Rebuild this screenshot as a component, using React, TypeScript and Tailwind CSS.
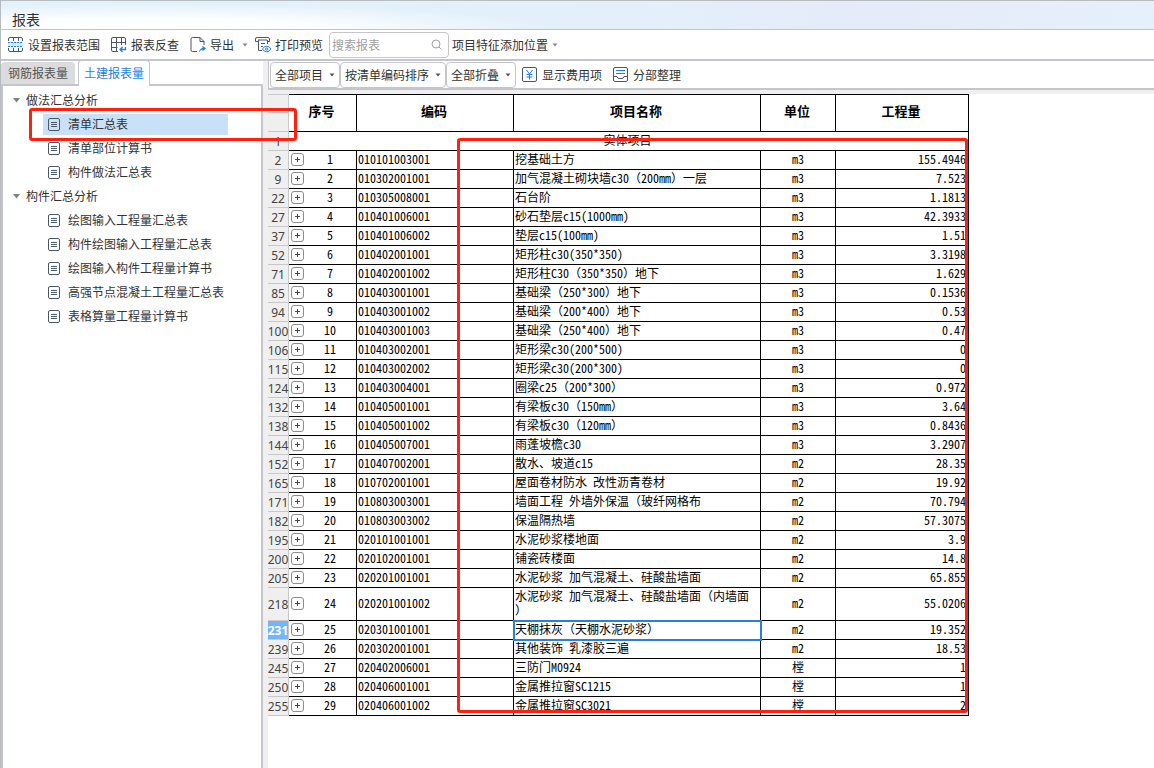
import type { ReactNode } from "react";

const INK = "#4a5568";
const BLUE = "#1e7fe6";

type Row = [head: string, no: number, code: string, name: string, unit: string, qty: string];

const rows: Row[] = [
  ["2", 1, "010101003001", "挖基础土方", "m3", "155.4946"],
  ["9", 2, "010302001001", "加气混凝土砌块墙c30（200mm）一层", "m3", "7.523"],
  ["22", 3, "010305008001", "石台阶", "m3", "1.1813"],
  ["27", 4, "010401006001", "砂石垫层c15(1000mm)", "m3", "42.3933"],
  ["37", 5, "010401006002", "垫层c15(100mm)", "m3", "1.51"],
  ["52", 6, "010402001001", "矩形柱c30(350*350)", "m3", "3.3198"],
  ["71", 7, "010402001002", "矩形柱C30（350*350）地下", "m3", "1.629"],
  ["85", 8, "010403001001", "基础梁（250*300）地下", "m3", "0.1536"],
  ["94", 9, "010403001002", "基础梁（200*400）地下", "m3", "0.53"],
  ["100", 10, "010403001003", "基础梁（250*400）地下", "m3", "0.47"],
  ["106", 11, "010403002001", "矩形梁c30(200*500)", "m3", "0"],
  ["115", 12, "010403002002", "矩形梁c30(200*300)", "m3", "0"],
  ["124", 13, "010403004001", "圈梁c25（200*300）", "m3", "0.972"],
  ["132", 14, "010405001001", "有梁板c30（150mm）", "m3", "3.64"],
  ["138", 15, "010405001002", "有梁板c30（120mm）", "m3", "0.8436"],
  ["144", 16, "010405007001", "雨蓬坡檐c30", "m3", "3.2907"],
  ["152", 17, "010407002001", "散水、坡道c15", "m2", "28.35"],
  ["165", 18, "010702001001", "屋面卷材防水 改性沥青卷材", "m2", "19.92"],
  ["171", 19, "010803003001", "墙面工程 外墙外保温（玻纤网格布", "m2", "70.794"],
  ["182", 20, "010803003002", "保温隔热墙", "m2", "57.3075"],
  ["195", 21, "020101001001", "水泥砂浆楼地面", "m2", "3.9"],
  ["200", 22, "020102001001", "铺瓷砖楼面", "m2", "14.8"],
  ["205", 23, "020201001001", "水泥砂浆 加气混凝土、硅酸盐墙面", "m2", "65.855"],
  ["218", 24, "020201001002", "水泥砂浆 加气混凝土、硅酸盐墙面（内墙面）", "m2", "55.0206"],
  ["231", 25, "020301001001", "天棚抹灰（天棚水泥砂浆）", "m2", "19.352"],
  ["239", 26, "020302001001", "其他装饰 乳漆胶三遍", "m2", "18.53"],
  ["245", 27, "020402006001", "三防门M0924", "樘", "1"],
  ["250", 28, "020406001001", "金属推拉窗SC1215", "樘", "1"],
  ["255", 29, "020406001002", "金属推拉窗SC3021", "樘", "2"],
];

const tree = [
  { title: "做法汇总分析", items: ["清单汇总表", "清单部位计算书", "构件做法汇总表"] },
  {
    title: "构件汇总分析",
    items: [
      "绘图输入工程量汇总表",
      "构件绘图输入工程量汇总表",
      "绘图输入构件工程量计算书",
      "高强节点混凝土工程量汇总表",
      "表格算量工程量计算书",
    ],
  },
];

function Icon({ children }: { children: ReactNode }) {
  return (
    <svg width="16" height="16" viewBox="0 0 16 16" fill="none" stroke={INK} aria-hidden="true" className="shrink-0">
      {children}
    </svg>
  );
}

function RangeIcon() {
  return (
    <Icon>
      <path d="M0 5h15v5H0Z" fill="#d6ecfd" stroke="none" />
      <path d="M.5 4V2Q.5.5 2 .5h11q1.500 0 1.500 1.500v2M.5 11v2Q.5 14.500 2 14.500h11q1.500 0 1.500-1.500v-2M5.500.5V4M10.500.5V4M5.500 11v3.500M10.500 11v3.500" />
      <path d="M0 5.500h15M0 9.500h15" stroke={BLUE} strokeDasharray="2 1" />
    </Icon>
  );
}

function BackCheckIcon() {
  return (
    <Icon>
      <path d="M7 14.500H2Q.5 14.500.5 13V2Q.5.5 2 .5h11q1.500 0 1.500 1.500v6M5.500.5v14M10.500.5v7.500M.5 5.500h14M.5 10.500h6" />
      <path d="M14.500 10v2.500h-5M11.500 10 9 12.500l2.500 2.500" stroke={BLUE} strokeWidth="1.300" />
    </Icon>
  );
}

function ExportIcon() {
  return (
    <Icon>
      <path d="M7 14.500H2.500Q1 14.500 1 13V2Q1 .5 2.500.5H10l4 4V8M10 .5V4.500h4" />
      <path d="M9 15.500q.3-4 3.500-4.500V8.800L16 11.500l-3.500 2.700v-1.700Q10.500 12.700 9 15.500Z" fill={BLUE} stroke="none" />
    </Icon>
  );
}

function PreviewIcon() {
  return (
    <Icon>
      <path d="M3 4.500H.5V2Q.5.5 2 .5h11q1.500 0 1.500 1.500v2.500H12M3 3h9M3.500 3v10.500H7M12.500 3v4M6 6.500h4M6 9.500h2" />
      <path d="M7.500 12q1.500-2.800 4.200-2.800T16 12q-1.500 2.800-4.300 2.800T7.500 12Z" stroke={BLUE} />
      <circle cx="11.700" cy="12" r="1.200" stroke={BLUE} />
    </Icon>
  );
}

function SheetIcon() {
  return (
    <svg width="12" height="13" viewBox="0 0 12 13" fill="none" stroke={INK} aria-hidden="true" className="shrink-0">
      <rect x=".5" y=".5" width="11" height="12" rx="1.500" />
      <path d="M3 4.500h6M3 6.500h6M3 8.500h6" />
    </svg>
  );
}

function Caret({ className = "fill-[#555]" }: { className?: string }) {
  return (
    <svg width="6" height="4" viewBox="0 0 6 4" aria-hidden="true" className={`shrink-0 ${className}`}>
      <path d="M.5.5h5L3 3.500Z" />
    </svg>
  );
}

function DropButton({ children }: { children: ReactNode }) {
  return (
    <button type="button" className="flex h-[26px] items-center gap-[6px] rounded border border-[#c6c6ca] bg-white px-1">
      {children}
      <Caret />
    </button>
  );
}

function TitleBar() {
  return (
    <header className="flex h-[30px] items-end border-t border-b border-t-[#b8bcc0] border-b-[#c0c4ca] bg-[radial-gradient(ellipse_400px_26px_at_150px_100%,#ffffff_35%,transparent),linear-gradient(to_right,#e2f1fb,#e3f0fa_55%,#e5ebf8_75%,#e6f0fa)] pl-[11px]">
      <h1 className="text-[14px] leading-[20px] text-[#333]">报表</h1>
    </header>
  );
}

function MainToolbar() {
  return (
    <div className="flex h-[31px] items-center border-b-2 border-[#c4c6cc] bg-white pl-[7px]">
      <button type="button" className="flex items-center gap-1"><RangeIcon />设置报表范围</button>
      <button type="button" className="ml-[11px] flex items-center gap-1"><BackCheckIcon />报表反查</button>
      <button type="button" className="ml-[11px] flex items-center gap-1"><ExportIcon />导出<Caret className="ml-1 fill-[#888]" /></button>
      <button type="button" className="ml-[7px] flex items-center gap-1"><PreviewIcon />打印预览</button>
      <label className="ml-[6px] flex h-[26px] w-[120px] items-center rounded border border-[#c6c6ca] px-[2px]">
        <input type="text" aria-label="搜索报表" placeholder="搜索报表" className="min-w-0 flex-1 outline-none placeholder:text-[#a0a0a0]" />
        <svg width="11" height="11" viewBox="0 0 11 11" fill="none" stroke="#a0a0a0" aria-hidden="true" className="mr-1">
          <circle cx="5" cy="5" r="4" />
          <path d="m8 8 2.500 2.500" />
        </svg>
      </label>
      <button type="button" className="ml-[3px] flex items-center gap-1">项目特征添加位置<Caret className="fill-[#888]" /></button>
    </div>
  );
}

function Sidebar() {
  return (
    <aside className="flex w-[262px] shrink-0 flex-col">
      <div role="tablist" className="flex h-[23px] items-end">
        <button type="button" role="tab" aria-selected="false" className="h-[22px] w-[74px] rounded-t bg-[#dcdcdc] text-[#555]">钢筋报表量</button>
        <button type="button" role="tab" aria-selected="true" className="relative -mb-[2px] ml-[3px] h-[26px] w-[72px] rounded-t border border-b-0 border-[#c4c6cc] bg-white pb-[2px] text-[#1e7fe6]">土建报表量</button>
      </div>
      <nav className="flex-1 border-2 border-b-0 border-[#c4c6cc] bg-white pt-[2px]">
        {tree.map((group) => (
          <section key={group.title}>
            <h2 className="flex h-6 items-center gap-[6px] pl-[10px]">
              <svg width="7" height="5" viewBox="0 0 7 5" fill="#808080" aria-hidden="true"><path d="M0 0h7L3.500 4.500Z" /></svg>
              {group.title}
            </h2>
            <ul>
              {group.items.map((item) => (
                <li key={item} className="flex h-6 items-center pl-[40px]">
                  <a
                    href="#"
                    className={`flex h-[21px] w-[185px] items-center gap-2 pl-[5px] whitespace-nowrap ${item === "清单汇总表" ? "bg-[#c9e0f9]" : ""}`}
                  >
                    <SheetIcon />
                    {item}
                  </a>
                </li>
              ))}
            </ul>
          </section>
        ))}
      </nav>
    </aside>
  );
}

function ReportToolbar() {
  return (
    <div className="flex h-[29px] items-center border-b-2 border-l border-[#c4c6cc] bg-white pl-[1px]">
      <DropButton>全部项目</DropButton>
      <DropButton>按清单编码排序</DropButton>
      <DropButton>全部折叠</DropButton>
      <button type="button" className="ml-[6px] flex items-center gap-1">
        <Icon>
          <rect x=".5" y=".5" width="14" height="14" rx="1.500" />
          <path d="m4.500 3 3 4 3-4M7.500 7v5.500M4.500 7.500h6M4.500 10h6" stroke={BLUE} />
        </Icon>
        显示费用项
      </button>
      <button type="button" className="ml-[11px] flex items-center gap-1">
        <Icon>
          <rect x=".5" y=".5" width="14" height="14" rx="1.500" />
          <path d="M3 3.500h9M3 6.500h9" stroke={BLUE} />
          <path d="M.5 9.500H4q.5 2 2 2h3q1.500 0 2-2h3.500" />
        </Icon>
        分部整理
      </button>
    </div>
  );
}

const headCell = "border-t border-r border-b border-black bg-white p-0 pr-[2px] pb-1 text-[13px] font-bold";
const cell = "border-r border-b border-black bg-white p-0 pb-[2px]";
const rowHead = "border-r border-b border-[#c8c8c8] bg-[#efefef] p-0 pt-[2px] text-[12px] leading-[16px] font-normal font-['Noto_Sans',sans-serif] text-[#444]";
const activeRowHead = "border-r border-b border-[#c8c8c8] bg-[#74b5f8] p-0 pt-[2px] text-[12px] leading-[16px] font-bold font-['Noto_Sans',sans-serif] text-white";

function ReportTable() {
  return (
    <table className="w-[701px] table-fixed border-separate border-spacing-0 font-['Noto_Sans_Mono_CJK_SC','Noto_Sans_CJK_SC','Liberation_Mono',monospace] leading-[14px] text-black">
      <colgroup>
        <col className="w-[21px]" />
        <col className="w-[68px]" />
        <col className="w-[157px]" />
        <col className="w-[247px]" />
        <col className="w-[75px]" />
        <col className="w-[133px]" />
      </colgroup>
      <thead>
        <tr className="h-[38px]">
          <td className="border-t border-r border-b border-[#c8c8c8] bg-[#efefef] p-0">
            <div className="h-[18px] border-b border-[#c8c8c8]" />
            <div className="h-[18px]" />
          </td>
          <th className={headCell}>序号</th>
          <th className={headCell}>编码</th>
          <th className={headCell}>项目名称</th>
          <th className={headCell}>单位</th>
          <th className={headCell}>工程量</th>
        </tr>
      </thead>
      <tbody>
        <tr className="h-[19px]">
          <th className={rowHead}>1</th>
          <td colSpan={5} className={`${cell} pr-[2px] text-center`}>实体项目</td>
        </tr>
        {rows.map(([head, no, code, name, unit, qty]) => {
          const active = head === "231";
          return (
            <tr key={head} className={no === 24 ? "h-[33px]" : "h-[19px]"}>
              <th className={active ? activeRowHead : rowHead}>
                <span className="flex justify-center">{head}</span>
              </th>
              <td className={cell}>
                <div className="flex items-center pl-[2px]">
                  <button type="button" aria-label={`展开第${no}项`} className="flex size-[13px] shrink-0 items-center justify-center rounded-[3px] border border-[#8c8c8c] bg-white">
                    <svg width="5" height="5" viewBox="0 0 5 5" stroke="#444" aria-hidden="true"><path d="M0 2.500h5M2.500 0v5" /></svg>
                  </button>
                  <span className="flex-1 text-center">{no}</span>
                </div>
              </td>
              <td className={`${cell} pl-[1px]`}>{code}</td>
              <td className={`${cell} pr-[6px] pl-[1px] [line-break:anywhere] ${active ? "outline-2 -outline-offset-1 outline-[#2a7fde]" : ""}`}>{name}</td>
              <td className={`${cell} text-center`}>{unit}</td>
              <td className={`${cell} pr-[2px] text-right`}>{qty}</td>
            </tr>
          );
        })}
      </tbody>
    </table>
  );
}

export default function App() {
  return (
    <div className="relative flex min-h-screen flex-col overflow-hidden border-l border-[#b8bcc0] bg-white font-['Noto_Sans_CJK_SC',sans-serif] text-[12px] leading-[18px] text-[#333]">
      <TitleBar />
      <MainToolbar />
      <div className="flex flex-1">
        <Sidebar />
        <main className="flex min-w-0 flex-1 flex-col border-l-5 border-[#f0f0f2] bg-white">
          <ReportToolbar />
          <div className="h-1 bg-[#f0f0f0]" />
          <div className="relative flex-1">
            <ReportTable />
            <div className="pointer-events-none absolute top-11 left-[189px] h-[575px] w-[511px] rounded-[3px] border-3 border-[#ff2010]" />
          </div>
        </main>
      </div>
      <div className="pointer-events-none absolute top-[108px] left-7 h-[33px] w-[268px] rounded-[3px] border-3 border-[#ff2010]" />
    </div>
  );
}
